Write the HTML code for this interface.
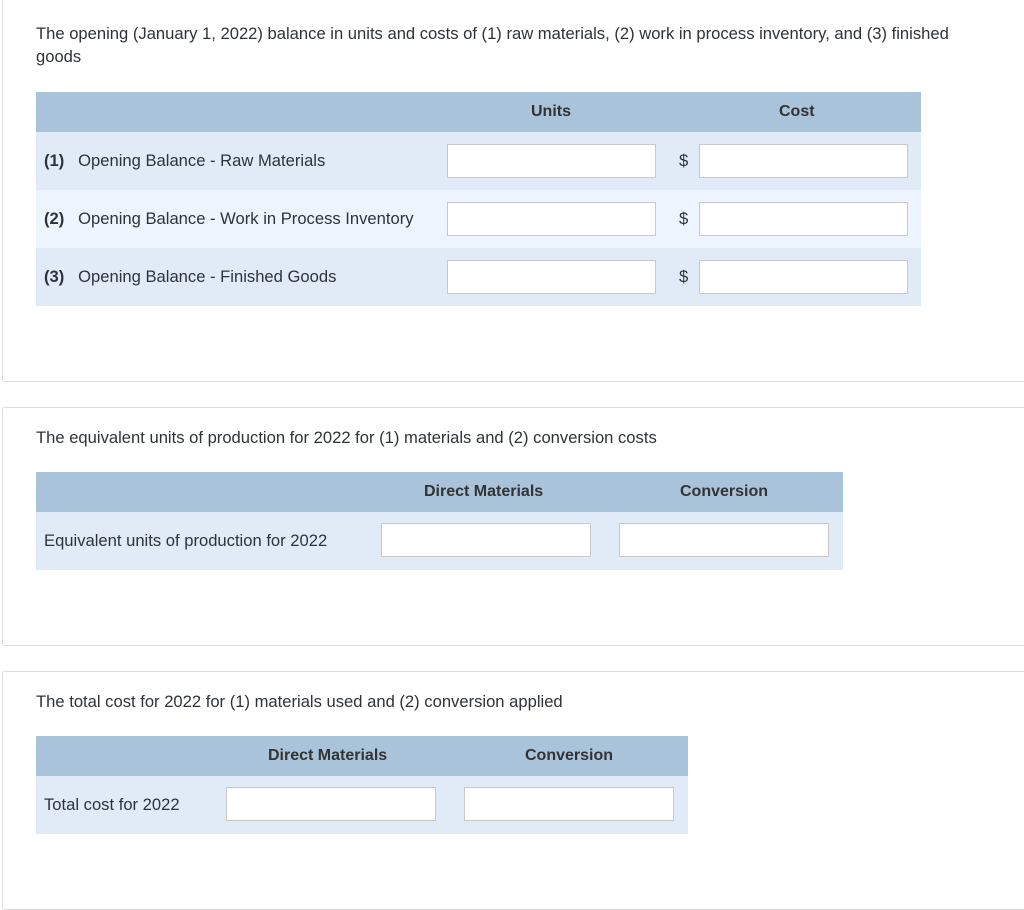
<!DOCTYPE html>
<html><head><style>
body{margin:0;background:#fff;font-family:"Liberation Sans",sans-serif;color:#2d3338;width:1024px;height:910px;overflow:hidden;position:relative}
.panel{position:absolute;left:2px;width:1040px;border:1px solid #dcdcdc;border-radius:3px;background:#fff}
.abs{position:absolute}
.txt{font-size:16.6px;line-height:23px}
.hd{background:#a9c3da}
.r1{background:#e1ebf7}
.r2{background:#edf4fd}
.inp{position:absolute;background:#fff;border:1px solid #c8c8c8;box-sizing:border-box;height:34px}
.th{position:absolute;font-weight:bold;font-size:16px;color:#333;top:11px}
.lbl{position:absolute;font-size:16.6px}
</style></head><body>
<div class="panel" style="top:-4px;height:384px"></div>
<div class="panel" style="top:407px;height:237px"></div>
<div class="panel" style="top:671px;height:237px"></div>

<div class="abs txt" style="left:36px;top:22px;width:930px">The opening (January 1, 2022) balance in units and costs of (1) raw materials, (2) work in process inventory, and (3) finished goods</div>

<div class="abs hd" style="left:36px;top:92px;width:885px;height:40px"><div class="th" style="left:495px">Units</div><div class="th" style="left:743px">Cost</div></div>
<div class="abs r1" style="left:36px;top:132px;width:885px;height:58px"></div>
<div class="abs r2" style="left:36px;top:190px;width:885px;height:58px"></div>
<div class="abs r1" style="left:36px;top:248px;width:885px;height:58px"></div>
<div class="lbl" style="left:44px;top:151px"><b>(1)</b>&nbsp;&nbsp; Opening Balance - Raw Materials</div>
<div class="lbl" style="left:44px;top:209px"><b>(2)</b>&nbsp;&nbsp; Opening Balance - Work in Process Inventory</div>
<div class="lbl" style="left:44px;top:267px"><b>(3)</b>&nbsp;&nbsp; Opening Balance - Finished Goods</div>
<div class="inp" style="left:447px;top:144px;width:209px"></div>
<div class="inp" style="left:447px;top:202px;width:209px"></div>
<div class="inp" style="left:447px;top:260px;width:209px"></div>
<div class="lbl" style="left:679px;top:151px">$</div>
<div class="lbl" style="left:679px;top:209px">$</div>
<div class="lbl" style="left:679px;top:267px">$</div>
<div class="inp" style="left:699px;top:144px;width:209px"></div>
<div class="inp" style="left:699px;top:202px;width:209px"></div>
<div class="inp" style="left:699px;top:260px;width:209px"></div>

<div class="abs txt" style="left:36px;top:426px">The equivalent units of production for 2022 for (1) materials and (2) conversion costs</div>
<div class="abs hd" style="left:36px;top:472px;width:807px;height:40px"><div class="th" style="left:388px">Direct Materials</div><div class="th" style="left:644px">Conversion</div></div>
<div class="abs r1" style="left:36px;top:512px;width:807px;height:58px"></div>
<div class="lbl" style="left:44px;top:531px">Equivalent units of production for 2022</div>
<div class="inp" style="left:381px;top:523px;width:210px"></div>
<div class="inp" style="left:619px;top:523px;width:210px"></div>

<div class="abs txt" style="left:36px;top:690px">The total cost for 2022 for (1) materials used and (2) conversion applied</div>
<div class="abs hd" style="left:36px;top:736px;width:652px;height:40px"><div class="th" style="left:232px">Direct Materials</div><div class="th" style="left:489px">Conversion</div></div>
<div class="abs r1" style="left:36px;top:776px;width:652px;height:58px"></div>
<div class="lbl" style="left:44px;top:795px">Total cost for 2022</div>
<div class="inp" style="left:226px;top:787px;width:210px"></div>
<div class="inp" style="left:464px;top:787px;width:210px"></div>
</body></html>
